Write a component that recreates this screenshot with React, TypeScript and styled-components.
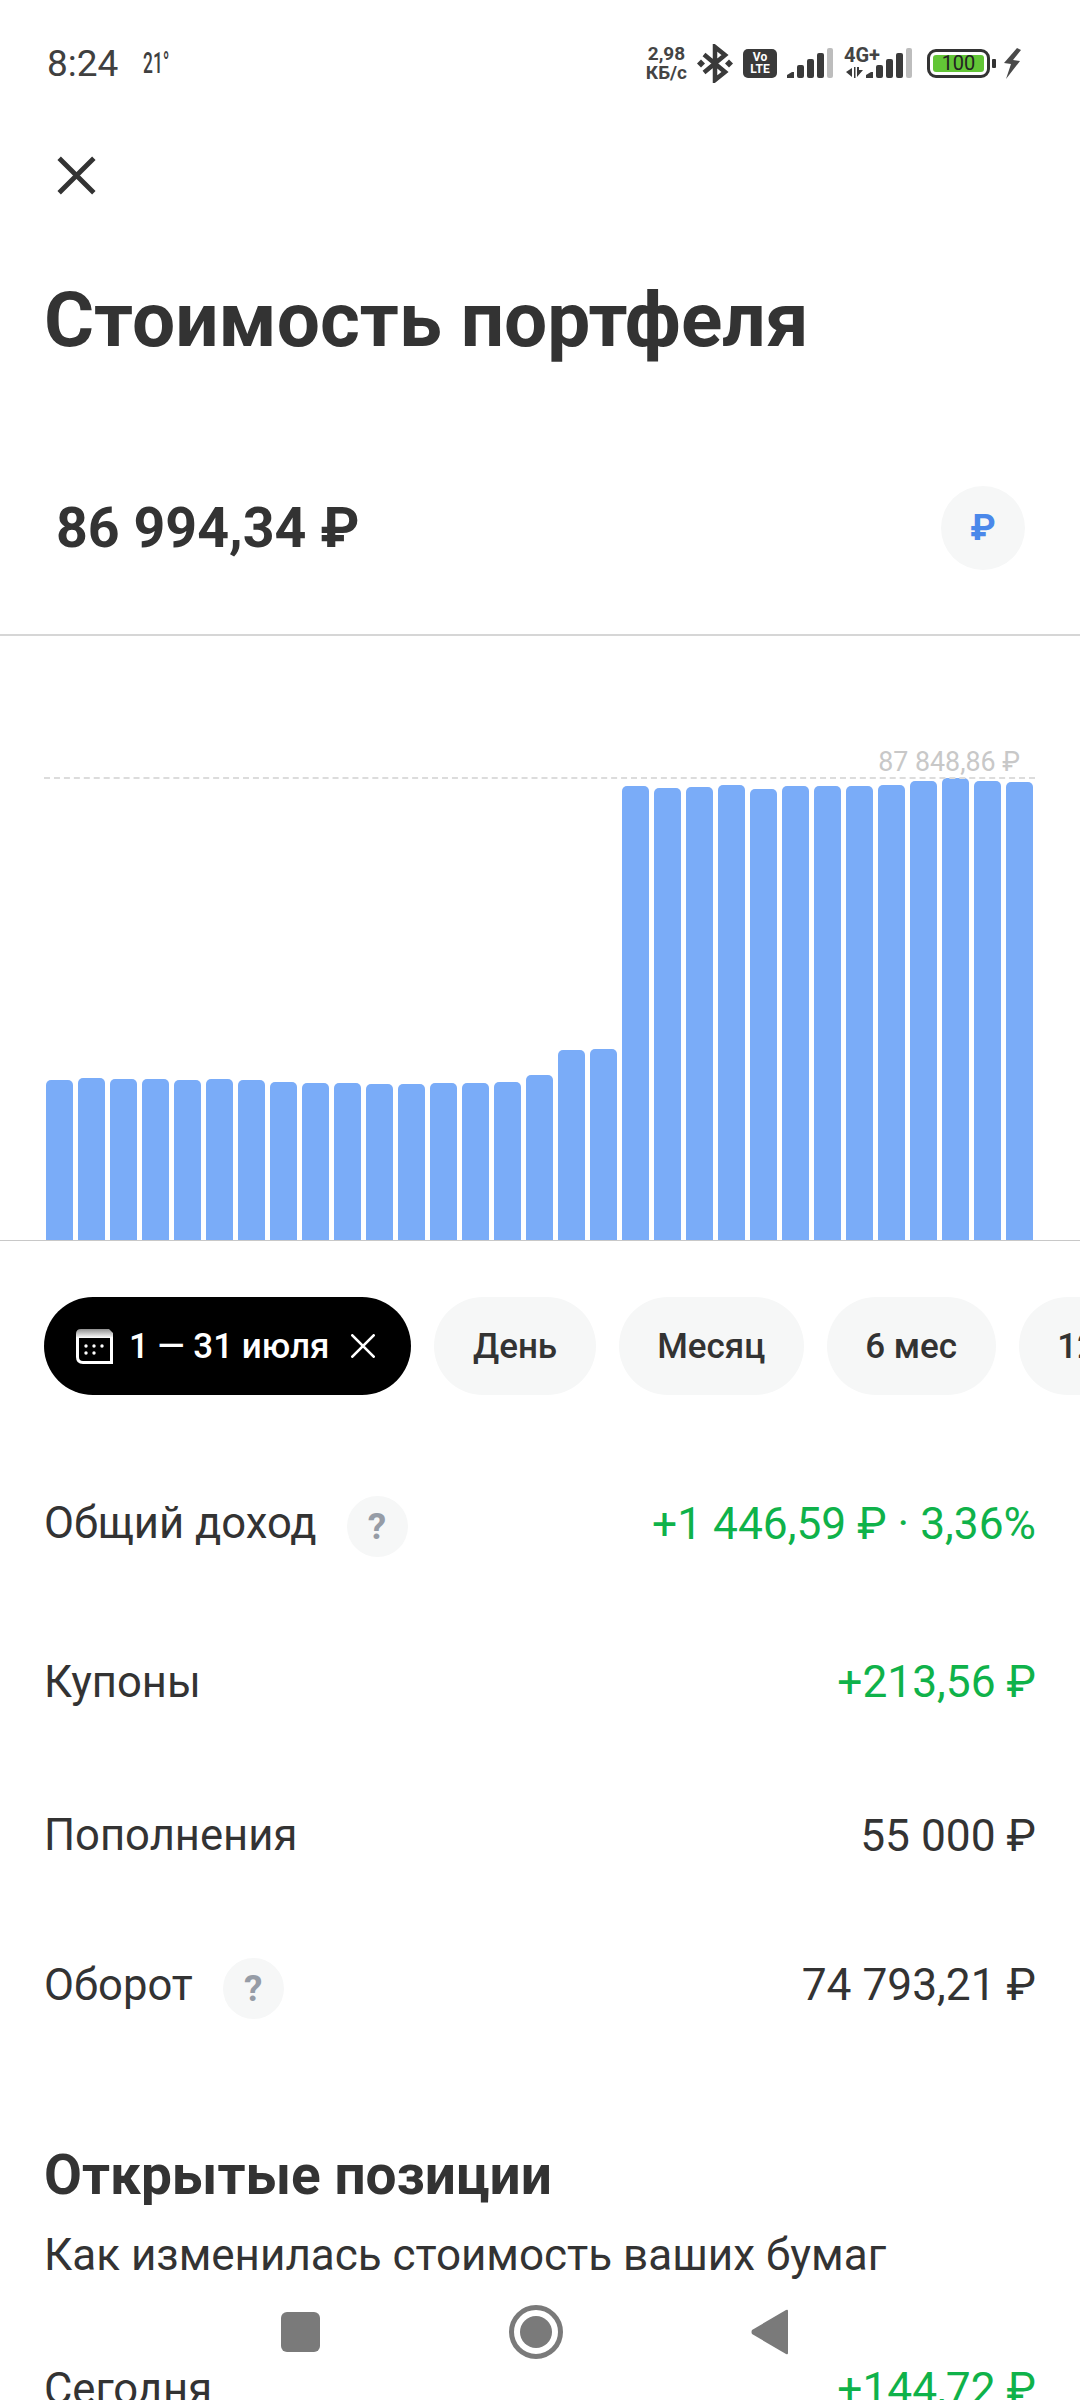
import styled, { createGlobalStyle } from 'styled-components';

const GlobalStyle = createGlobalStyle`
    html, body {
        margin: 0;
        padding: 0;
        background: #fff;
    }
`;

const barTops = [
    1080, 1078, 1079, 1079, 1080, 1079, 1080, 1082, 1083, 1083, 1084, 1084, 1083, 1083, 1082, 1075, 1050, 1049,
    786, 788, 787, 785, 789, 786, 786, 786, 785, 781, 778, 781, 782,
];
const BASELINE = 1240;

const rows = [
    { label: 'Общий доход', value: '+1 446,59 ₽ · 3,36%', help: true, green: true, h: 161 },
    { label: 'Купоны', value: '+213,56 ₽', green: true, h: 156 },
    { label: 'Пополнения', value: '55 000 ₽', h: 151 },
    { label: 'Оборот', value: '74 793,21 ₽', help: true, h: 148 },
];

function Bluetooth() {
    return (
        <svg width="36" height="39" viewBox="0 0 36 39">
            <path d="M7 10.5 L28 28 L18 36 V3 L28 11 L7 28.5" fill="none" stroke="#3a3a3a" strokeWidth="4.5" />
            <path d="M0 19.5 L4 15.5 L8 19.5 L4 23.5 Z M28 19.5 L32 15.5 L36 19.5 L32 23.5 Z" fill="#3a3a3a" />
        </svg>
    );
}

function Signal() {
    return (
        <svg width="46" height="30" viewBox="0 0 46 30">
            <path d="M0 30 V27 L5 24 H7 V30 Z" fill="#3a3a3a" />
            <rect x="10" y="17" width="7" height="13" rx="2" fill="#3a3a3a" />
            <rect x="20" y="11" width="7" height="19" rx="2" fill="#3a3a3a" />
            <rect x="30" y="5" width="7" height="25" rx="2" fill="#3a3a3a" />
            <rect x="40" y="0" width="6" height="30" rx="2" fill="#bdbdbd" />
        </svg>
    );
}

function DataArrows() {
    return (
        <svg width="17" height="11" viewBox="0 0 17 11">
            <path d="M0 5 L6 1 V10 Z M8 0 H9.5 V11 H8 Z" fill="#3a3a3a" />
            <path d="M11 0 H13 V3 H17 L11 10 Z" fill="#3a3a3a" />
        </svg>
    );
}

function Bolt() {
    return (
        <svg width="18" height="31" viewBox="0 0 18 31">
            <path d="M14 0 L1 15 L8 16 L3 31 L17 13 L10 12 L18 2 Z" fill="#4a4a4a" />
        </svg>
    );
}

function CalendarIcon() {
    return (
        <svg width="37" height="35" viewBox="0 0 37 35" fill="none">
            <defs>
                <linearGradient id="calendarHead" x1="0" y1="0" x2="0" y2="1">
                    <stop offset="0" stopColor="#8f8f8f" />
                    <stop offset="1" stopColor="#fff" />
                </linearGradient>
            </defs>
            <path d="M0 5 Q0 0 5 0 H33 L37 4 V9 H0 Z" fill="url(#calendarHead)" />
            <path d="M1.5 8 V28 Q1.5 33.5 7 33.5 H35.5 V8" stroke="#fff" strokeWidth="3" />
            <g fill="#fff">
                <circle cx="10" cy="17" r="1.7" />
                <circle cx="18" cy="17" r="1.7" />
                <circle cx="26" cy="17" r="1.7" />
                <circle cx="10" cy="24" r="1.7" />
                <circle cx="18" cy="24" r="1.7" />
            </g>
        </svg>
    );
}

function Cross({ size, color, width, round }: { size: number; color: string; width: number; round?: boolean }) {
    return (
        <svg width={size} height={size} viewBox="0 0 36 36" fill="none">
            <path d="M2 2 L34 34 M34 2 L2 34" stroke={color} strokeWidth={width} strokeLinecap={round ? 'round' : 'butt'} />
        </svg>
    );
}

export default function App() {
    return (
        <Screen>
            <GlobalStyle />
            <StatusBar>
                <StatusLeft>
                    <Clock>8:24</Clock>
                    <Temp>21°</Temp>
                </StatusLeft>
                <StatusRight>
                    <Speed>
                        <span>2,98</span>
                        <span>КБ/с</span>
                    </Speed>
                    <Bluetooth />
                    <Volte>
                        <span>Vo</span>
                        <span>LTE</span>
                    </Volte>
                    <Signal />
                    <Network>
                        <NetworkLabel>4G+</NetworkLabel>
                        <NetworkArrows>
                            <DataArrows />
                        </NetworkArrows>
                        <Signal />
                    </Network>
                    <Battery>
                        <BatteryBody>
                            <BatteryFill>100</BatteryFill>
                        </BatteryBody>
                        <BatteryCap />
                    </Battery>
                    <Bolt />
                </StatusRight>
            </StatusBar>

            <CloseButton>
                <Cross size={39} color="#333" width={4.5} />
            </CloseButton>

            <Title>Стоимость портфеля</Title>

            <AmountRow>
                <Amount>86 994,34 ₽</Amount>
                <CurrencyButton>₽</CurrencyButton>
            </AmountRow>

            <Chart>
                <MaxLabel>87 848,86 ₽</MaxLabel>
                <MaxLine />
                <Bars>
                    {barTops.map((top, i) => (
                        <Bar key={i} $height={BASELINE - top} />
                    ))}
                </Bars>
            </Chart>

            <Periods>
                <ActivePill>
                    <CalendarIcon />
                    <span>1 — 31 июля</span>
                    <PillClose>
                        <Cross size={24} color="#fff" width={4} round />
                    </PillClose>
                </ActivePill>
                <Pill>День</Pill>
                <Pill>Месяц</Pill>
                <Pill>6 мес</Pill>
                <Pill>12 мес</Pill>
            </Periods>

            <Stats>
                {rows.map(row => (
                    <Row key={row.label} $height={row.h}>
                        <RowLabel>
                            {row.label}
                            {row.help && <Help>?</Help>}
                        </RowLabel>
                        <RowValue $green={row.green}>{row.value}</RowValue>
                    </Row>
                ))}
            </Stats>

            <Section>
                <SectionTitle>Открытые позиции</SectionTitle>
                <SectionText>Как изменилась стоимость ваших бумаг</SectionText>
                <TodayRow>
                    <RowLabel>Сегодня</RowLabel>
                    <RowValue $green>+144,72 ₽</RowValue>
                </TodayRow>
            </Section>

            <NavBar>
                <NavSquare />
                <NavCircle />
                <svg width="38" height="46" viewBox="0 0 38 46">
                    <path d="M37 2 V44 Q37 46 35 45 L1 25 Q0 23 1 21 L35 1 Q37 0 37 2 Z" fill="#7a7a7a" />
                </svg>
            </NavBar>
        </Screen>
    );
}

const Screen = styled.div`
    position: relative;
    width: 1080px;
    height: 2400px;
    overflow: hidden;
    background: #fff;
    color: #333;
    font-family: Roboto, 'Noto Sans', sans-serif;
`;

const StatusBar = styled.div`
    height: 126px;
    padding: 0 59px 0 47px;
    display: flex;
    align-items: center;
    justify-content: space-between;
    box-sizing: border-box;
`;

const StatusLeft = styled.div`
    display: flex;
    align-items: center;
    gap: 25px;
`;

const Clock = styled.div`
    font-size: 37px;
    color: #404040;
`;

const Temp = styled.div`
    font-size: 29px;
    font-weight: 500;
    color: #404040;
    transform: scaleX(0.6);
    transform-origin: left center;
`;

const StatusRight = styled.div`
    display: flex;
    align-items: center;
    gap: 10px;
`;

const Speed = styled.div`
    display: flex;
    flex-direction: column;
    align-items: center;
    font-size: 19px;
    line-height: 19px;
    font-weight: 700;
    color: #444;
`;

const Volte = styled.div`
    width: 34px;
    height: 29px;
    border-radius: 5px;
    background: #3a3a3a;
    color: #fff;
    font-size: 12px;
    line-height: 12px;
    font-weight: 700;
    display: flex;
    flex-direction: column;
    align-items: center;
    justify-content: center;
`;

const Network = styled.div`
    position: relative;
    width: 68px;
    margin-left: 1px;
    display: flex;
    justify-content: flex-end;
`;

const NetworkLabel = styled.div`
    position: absolute;
    left: 0;
    top: -3px;
    font-size: 20px;
    line-height: 20px;
    font-weight: 700;
    color: #444;
`;

const NetworkArrows = styled.div`
    position: absolute;
    left: 2px;
    bottom: 0;
    display: flex;
`;

const Battery = styled.div`
    display: flex;
    align-items: center;
    gap: 2px;
    margin-left: 5px;
`;

const BatteryBody = styled.div`
    width: 63px;
    height: 29px;
    box-sizing: border-box;
    border: 3px solid #333;
    border-radius: 9px;
    padding: 3px;
    display: flex;
`;

const BatteryFill = styled.div`
    flex: 1;
    border-radius: 3px;
    background: #62c536;
    color: #222;
    font-size: 20px;
    line-height: 17px;
    text-align: center;
`;

const BatteryCap = styled.div`
    width: 4px;
    height: 9px;
    border-radius: 1px;
    background: #333;
    margin-right: -3px;
`;

const CloseButton = styled.div`
    margin-left: 57px;
    height: 38px;
    margin-top: 30px;
`;

const Title = styled.h1`
    margin: 81px 0 0 44px;
    font-size: 76.6px;
    line-height: 90px;
    font-weight: 700;
    color: #333;
    white-space: nowrap;
`;

const AmountRow = styled.div`
    margin-top: 121px;
    padding: 0 55px 64px 56px;
    height: 84px;
    display: flex;
    align-items: center;
    justify-content: space-between;
    border-bottom: 2px solid #d6d6d6;
`;

const Amount = styled.div`
    font-size: 55.5px;
    font-weight: 700;
    color: #333;
`;

const CurrencyButton = styled.div`
    width: 84px;
    height: 84px;
    border-radius: 50%;
    background: #f6f7f7;
    color: #4a88ea;
    font-size: 36px;
    font-weight: 700;
    display: flex;
    align-items: center;
    justify-content: center;
`;

const Chart = styled.div`
    position: relative;
    height: 604px;
    display: flex;
    align-items: flex-end;
    border-bottom: 1px solid #c8c8c8;
`;

const MaxLabel = styled.div`
    position: absolute;
    right: 60px;
    top: 110px;
    font-size: 26.8px;
    color: #c8c8c8;
`;

const MaxLine = styled.div`
    position: absolute;
    left: 44px;
    right: 45px;
    top: 141px;
    border-top: 2px dashed #dcdcdc;
`;

const Bars = styled.div`
    display: flex;
    align-items: flex-end;
    gap: 5px;
    margin-left: 46px;
`;

const Bar = styled.div<{ $height: number }>`
    width: 27px;
    height: ${p => p.$height}px;
    border-radius: 5px 5px 0 0;
    background: #7aacf8;
`;

const Periods = styled.div`
    margin-top: 56px;
    padding-left: 44px;
    display: flex;
    gap: 23px;
    white-space: nowrap;
`;

const Pill = styled.div`
    height: 98px;
    flex: none;
    padding: 0 38.5px;
    border-radius: 49px;
    background: #f6f7f7;
    color: #333;
    font-size: 35px;
    font-weight: 500;
    display: flex;
    align-items: center;
`;

const ActivePill = styled(Pill)`
    padding: 0 36px 0 32px;
    gap: 16px;
    background: #000;
    color: #fff;
`;

const PillClose = styled.span`
    display: flex;
    margin-left: 6px;
`;

const Stats = styled.div`
    margin-top: 48px;
    padding: 0 44px;
`;

const Row = styled.div<{ $height: number }>`
    height: ${p => p.$height}px;
    display: flex;
    align-items: center;
    justify-content: space-between;
`;

const RowLabel = styled.div`
    font-size: 43.6px;
    color: #333;
    display: flex;
    align-items: center;
`;

const RowValue = styled.div<{ $green?: boolean }>`
    font-size: 44.3px;
    color: ${p => (p.$green ? '#0fb24a' : '#333')};
`;

const Help = styled.span`
    width: 61px;
    height: 61px;
    margin: 6px 0 0 30px;
    border-radius: 50%;
    background: #f6f7f7;
    color: #969ca6;
    font-size: 37px;
    font-weight: 700;
    display: flex;
    align-items: center;
    justify-content: center;
`;

const Section = styled.div`
    margin-top: 86px;
    padding: 0 44px;
`;

const SectionTitle = styled.h2`
    margin: 0;
    font-size: 55px;
    line-height: 60px;
    font-weight: 700;
    color: #333;
`;

const SectionText = styled.div`
    margin-top: 26px;
    font-size: 44px;
    line-height: 48px;
    color: #333;
`;

const TodayRow = styled.div`
    margin-top: 84px;
    display: flex;
    justify-content: space-between;
`;

const NavBar = styled.div`
    position: absolute;
    left: 281px;
    top: 2305px;
    width: 508px;
    height: 54px;
    display: flex;
    align-items: center;
    justify-content: space-between;
`;

const NavSquare = styled.div`
    width: 39px;
    height: 40px;
    border-radius: 6px;
    background: #7a7a7a;
`;

const NavCircle = styled.div`
    width: 54px;
    height: 54px;
    box-sizing: border-box;
    border-radius: 50%;
    border: 5px solid #7a7a7a;
    display: flex;
    align-items: center;
    justify-content: center;
    &::after {
        content: '';
        width: 32px;
        height: 32px;
        border-radius: 50%;
        background: #7a7a7a;
    }
`;
